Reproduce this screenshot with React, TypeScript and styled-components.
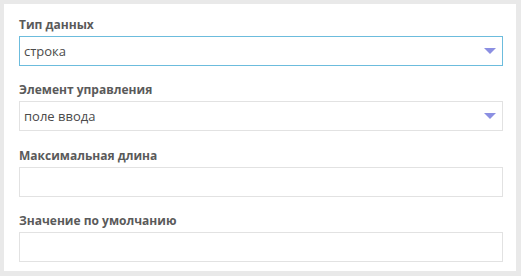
import * as React from "react";
import { createGlobalStyle, styled } from "styled-components";

const GlobalStyle = createGlobalStyle`
    html, body {
        margin: 0;
        padding: 0;
        background: #e9e9e9;
    }
    body {
        font-family: "Open Sans", "Liberation Sans", sans-serif;
    }
`;

type FieldDef = {
    label: string;
    value?: string;
    select?: boolean;
    focused?: boolean;
};

const fields: FieldDef[] = [
    { label: "Тип данных", value: "строка", select: true, focused: true },
    { label: "Элемент управления", value: "поле ввода", select: true },
    { label: "Максимальная длина" },
    { label: "Значение по умолчанию" },
];

const Page = styled.div`
    padding: 4px 5px 5px 4px;
    width: 521px;
    height: 276px;
    box-sizing: border-box;
`;

const Panel = styled.div`
    background: #ffffff;
    height: 100%;
    box-sizing: border-box;
    padding: 12px 13px 9px 15px;
    display: flex;
    flex-direction: column;
    gap: 15.34px;
`;

const Group = styled.div`
    display: flex;
    flex-direction: column;
    gap: 3px;
`;

const Label = styled.div`
    font-size: 12px;
    line-height: 17px;
    font-weight: 700;
    color: #5a5a5a;
`;

const Field = styled.div<{ $focused?: boolean }>`
    height: 30px;
    box-sizing: border-box;
    border: 1px solid ${(p) => (p.$focused ? "#6cbcdd" : "#e2e2e2")};
    display: flex;
    align-items: center;
    padding: 0 6px 0 4px;
    font-size: 13px;
    color: #4a4a4a;
`;

const Value = styled.span`
    flex: 1;
`;

const Arrow = styled.span`
    width: 0;
    height: 0;
    border-left: 6px solid transparent;
    border-right: 6px solid transparent;
    border-top: 6px solid #8b8fe2;
`;

const App = () => {
    return (
        <Page>
            <GlobalStyle />
            <Panel>
                {fields.map((f) => (
                    <Group key={f.label}>
                        <Label>{f.label}</Label>
                        <Field $focused={f.focused}>
                            <Value>{f.value}</Value>
                            {f.select && <Arrow />}
                        </Field>
                    </Group>
                ))}
            </Panel>
        </Page>
    );
};

export default App;
